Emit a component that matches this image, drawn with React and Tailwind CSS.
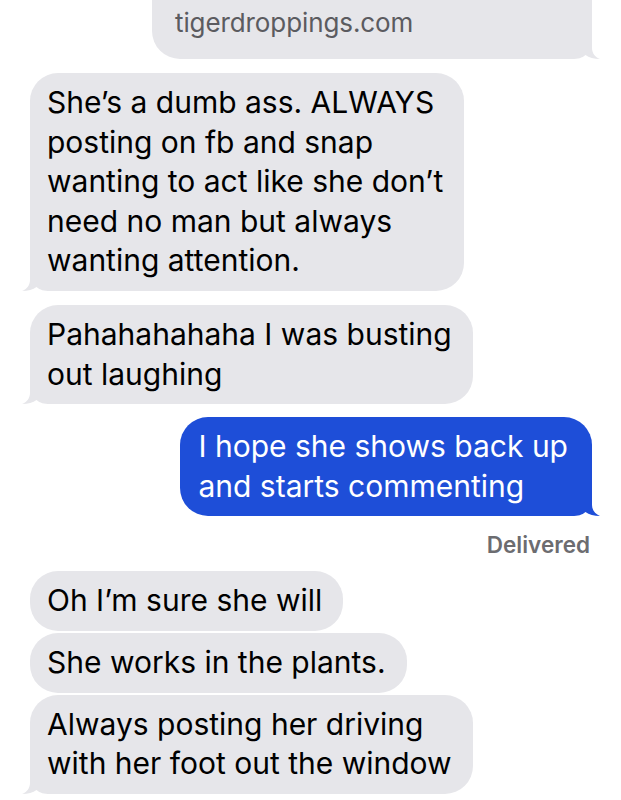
import React from "react";

function Tail({ side, color }) {
  const pos = side === "left" ? "left-[-8px]" : "right-[-8px] -scale-x-100";
  return (
    <svg
      className={`absolute bottom-0 ${pos}`}
      width="36"
      height="28"
      viewBox="0 0 36 28"
      aria-hidden="true"
    >
      <path
        d="M8 0 L8 17 C8 22 5 26 0 28 C6 28 11 26.5 14.5 24 C18 27 22 28 28 28 L36 28 L36 0 Z"
        fill={color}
      />
    </svg>
  );
}

function Received({ lines, tail }) {
  return (
    <div className="relative w-fit rounded-[28px] bg-[#e6e6ea] pl-[17px] pr-[21px] py-[10px] text-black">
      <div className="relative z-10 whitespace-nowrap">
        {lines.map((l, i) => (
          <div key={i}>{l}</div>
        ))}
      </div>
      {tail && <Tail side="left" color="#e6e6ea" />}
    </div>
  );
}

export default function App() {
  return (
    <div
      className="w-[621px] h-[800px] overflow-hidden bg-white text-[30px] leading-[39.6px]"
      style={{ fontFamily: "Inter, 'Liberation Sans', sans-serif" }}
    >
      {/* link preview bubble (cut off at top) */}
      <div className="flex justify-end pr-[29px]">
        <div className="relative w-[440px] h-[59px] rounded-b-[28px] bg-[#e6e6ea] pl-[23px]">
          <div className="relative z-10 text-[26px] leading-[34px] text-[#5b5b60] tracking-[-0.1px] pt-[6px]">
            tigerdroppings.com
          </div>
          <Tail side="right" color="#e6e6ea" />
        </div>
      </div>

      <div className="flex flex-col pl-[30px] pt-[14px] gap-[14px]">
        <Received
          tail
          lines={[
            "She’s a dumb ass. ALWAYS",
            "posting on fb and snap",
            "wanting to act like she don’t",
            "need no man but always",
            "wanting attention.",
          ]}
        />
        <Received tail lines={["Pahahahahaha I was busting", "out laughing"]} />
      </div>

      <div className="flex justify-end pr-[29px] pt-[13px]">
        <div className="relative w-fit rounded-[28px] bg-[#1e4ed8] pl-[18px] pr-[24px] py-[10px] text-white">
          <div className="relative z-10 whitespace-nowrap">
            <div>I hope she shows back up</div>
            <div>and starts commenting</div>
          </div>
          <Tail side="right" color="#1e4ed8" />
        </div>
      </div>

      <div className="flex justify-end pr-[31px] pt-[15px] text-[22.5px] leading-[28px] font-semibold text-[#6c6c70]">
        Delivered
      </div>

      <div className="flex flex-col pl-[30px] pt-[12px] gap-[2px]">
        <Received lines={["Oh I’m sure she will"]} />
        <Received lines={["She works in the plants."]} />
        <Received
          tail
          lines={["Always posting her driving", "with her foot out the window"]}
        />
      </div>
    </div>
  );
}
